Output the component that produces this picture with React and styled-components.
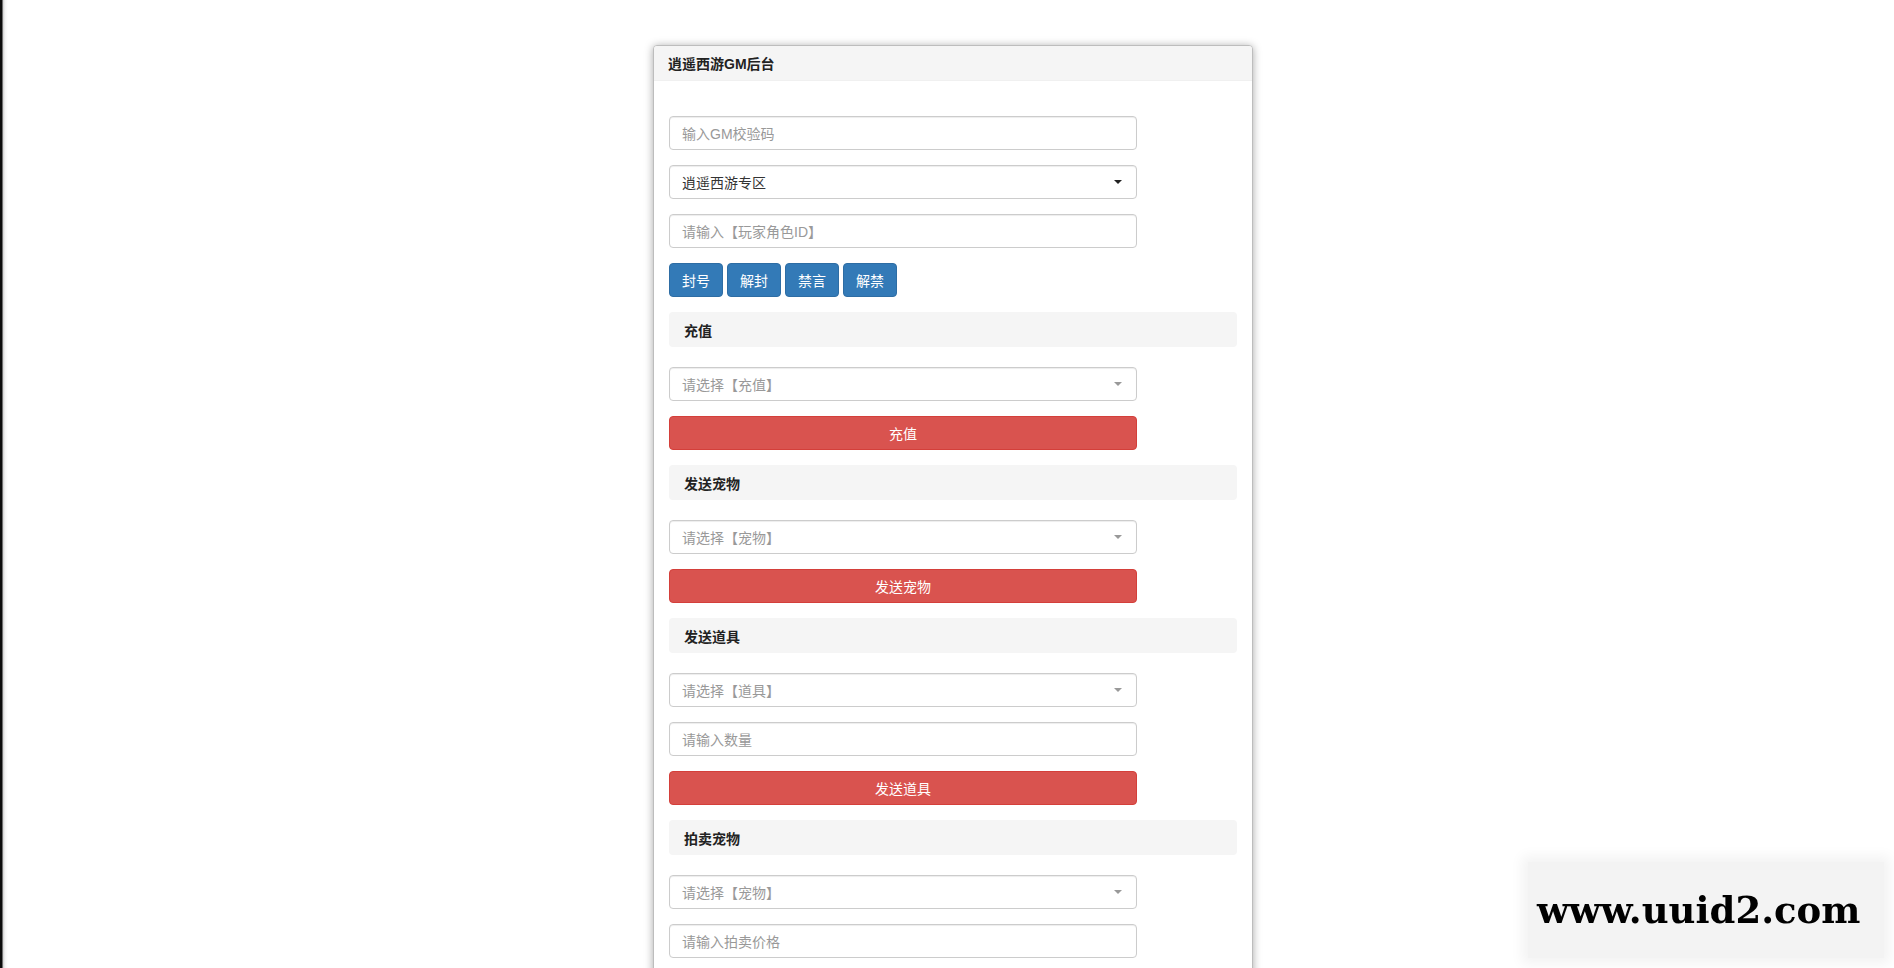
import React from 'react';
import styled, { createGlobalStyle } from 'styled-components';

const GlobalStyle = createGlobalStyle`
  html, body {
    margin: 0;
    height: 100%;
    overflow: hidden;
  }
  body {
    font-family: "Liberation Sans", "Noto Sans CJK SC", sans-serif;
    font-size: 14px;
    color: #333;
    background:
      linear-gradient(to right, #0c0c0c 0, #0c0c0c 2px, #cfcfcf 3px, #f4f4f4 5px, #fff 8px) left top / 10px 100% no-repeat,
      #fff;
  }
  * { box-sizing: border-box; }
`;

const Page = styled.div`
  padding: 45px 0 0 653px;
`;

const Panel = styled.div`
  width: 600px;
  background: #fff;
  border: 1px solid #bdbdbd;
  border-radius: 4px;
  box-shadow: 0 1px 9px rgba(0, 0, 0, 0.35);
`;

const PanelHeading = styled.div`
  height: 35px;
  padding: 0 14px;
  display: flex;
  align-items: center;
  background: #f5f5f5;
  border-bottom: 1px solid #f0f0f0;
  border-radius: 3px 3px 0 0;
  font-weight: bold;
  font-size: 14px;
  color: #222;
`;

const PanelBody = styled.div`
  padding: 35px 15px 15px;
`;

const Field = styled.div`
  width: 468px;
  height: 34px;
  margin-bottom: 15px;
  padding: 0 12px;
  display: flex;
  align-items: center;
  justify-content: space-between;
  border: 1px solid #ccc;
  border-radius: 4px;
  box-shadow: inset 0 1px 1px rgba(0, 0, 0, 0.075);
  font-size: 14px;
  color: ${p => (p.$filled ? '#333' : '#999')};
  background: #fff;
`;

const Caret = styled.span`
  width: 0;
  height: 0;
  margin-right: 2px;
  border-left: 4px solid transparent;
  border-right: 4px solid transparent;
  border-top: 4px solid ${p => (p.$dark ? '#222' : '#999')};
`;

const ButtonRow = styled.div`
  display: flex;
  gap: 4px;
  margin-bottom: 15px;
`;

const BlueButton = styled.button`
  height: 34px;
  padding: 0 12px;
  font-family: inherit;
  font-size: 14px;
  color: #fff;
  background: #337ab7;
  border: 1px solid #2e6da4;
  border-radius: 4px;
`;

const RedButton = styled.button`
  display: block;
  width: 468px;
  height: 34px;
  margin-bottom: 15px;
  font-family: inherit;
  font-size: 14px;
  color: #fff;
  background: #d9534f;
  border: 1px solid #d43f3a;
  border-radius: 4px;
`;

const SectionTitle = styled.div`
  height: 35px;
  margin-bottom: 20px;
  padding: 0 15px;
  display: flex;
  align-items: center;
  background: #f5f5f5;
  border-radius: 4px;
  font-weight: bold;
  font-size: 14px;
  color: #222;
`;

const Watermark = styled.div`
  position: fixed;
  left: 1528px;
  top: 862px;
  width: 356px;
  height: 96px;
  display: flex;
  align-items: center;
  padding-left: 9px;
  background: #f3f3f3;
  box-shadow: 0 0 12px 6px #f3f3f3;
  font-family: "DejaVu Serif", "Liberation Serif", serif;
  font-weight: bold;
  font-size: 37px;
  color: #000;
`;

const Select = ({ children, filled }) => (
  <Field $filled={filled}>
    <span>{children}</span>
    <Caret $dark={filled} />
  </Field>
);

const Input = ({ children }) => (
  <Field>
    <span>{children}</span>
  </Field>
);

export default function App() {
  return (
    <>
      <GlobalStyle />
      <Page>
        <Panel>
          <PanelHeading>逍遥西游GM后台</PanelHeading>
          <PanelBody>
            <Input>输入GM校验码</Input>
            <Select filled>逍遥西游专区</Select>
            <Input>请输入【玩家角色ID】</Input>
            <ButtonRow>
              {['封号', '解封', '禁言', '解禁'].map(label => (
                <BlueButton key={label}>{label}</BlueButton>
              ))}
            </ButtonRow>

            <SectionTitle>充值</SectionTitle>
            <Select>请选择【充值】</Select>
            <RedButton>充值</RedButton>

            <SectionTitle>发送宠物</SectionTitle>
            <Select>请选择【宠物】</Select>
            <RedButton>发送宠物</RedButton>

            <SectionTitle>发送道具</SectionTitle>
            <Select>请选择【道具】</Select>
            <Input>请输入数量</Input>
            <RedButton>发送道具</RedButton>

            <SectionTitle>拍卖宠物</SectionTitle>
            <Select>请选择【宠物】</Select>
            <Input>请输入拍卖价格</Input>
          </PanelBody>
        </Panel>
      </Page>
      <Watermark>www.uuid2.com</Watermark>
    </>
  );
}
